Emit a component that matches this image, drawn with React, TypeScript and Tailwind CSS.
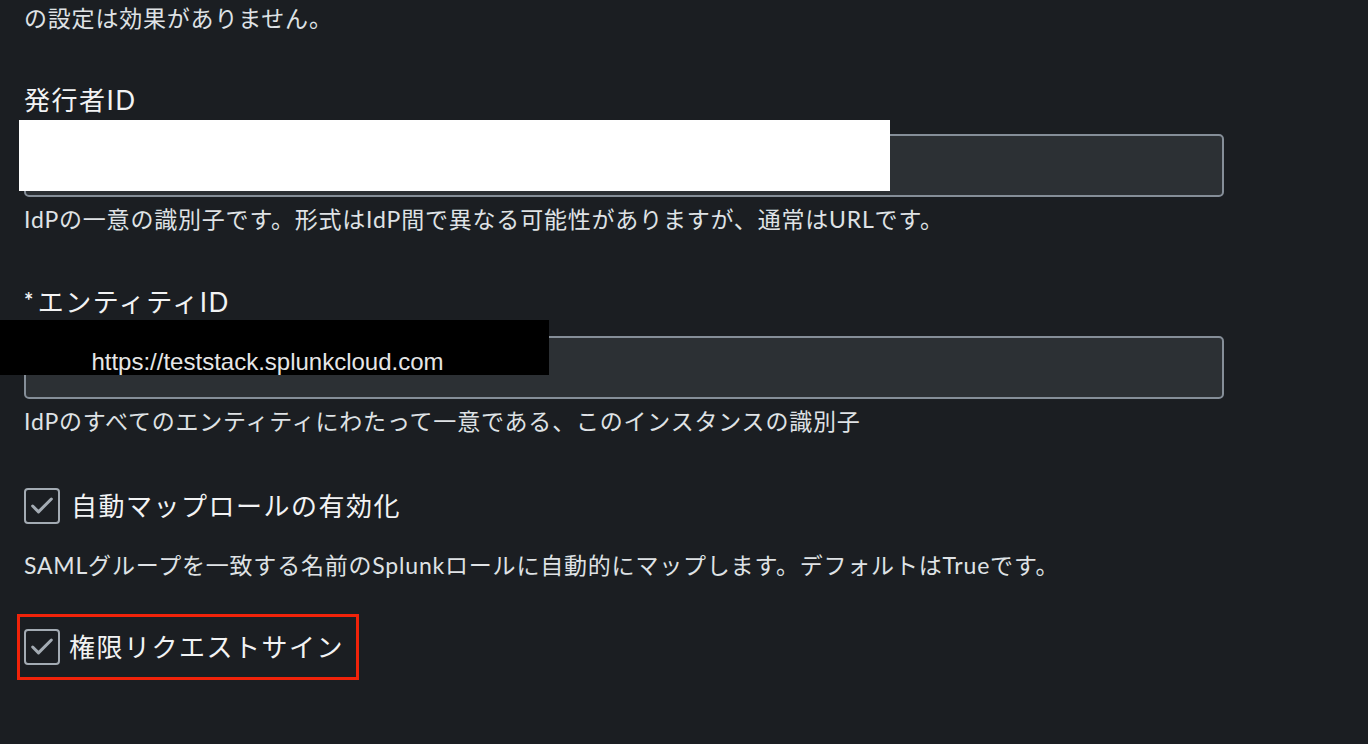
import { Check } from "lucide-react";

const font = "font-['Lato','Noto_Sans_CJK_JP',sans-serif]";
const helpClass = "text-[23px] leading-[36px] tracking-[0.8px] text-[#dfe2e5]";
const labelClass = "block text-[26px] leading-[36px] tracking-[1.5px]";

function Checkbox() {
  return (
    <span className="flex size-[36px] shrink-0 items-center justify-center rounded-[4px] border-2 border-[#a3abb3]">
      <Check className="size-[28px] text-[#a3abb3]" strokeWidth={2.6} aria-hidden />
    </span>
  );
}

function TextInput() {
  return <div className="h-[63px] w-full rounded-[5px] border-2 border-[#858e98] bg-[#2c3034]" />;
}

export default function App() {
  return (
    <div className={`relative min-h-screen w-full overflow-hidden bg-[#1b1e22] text-[#f2f3f4] ${font}`}>
      <div className="ml-[24px] w-[1200px]">
        <p className={helpClass}>の設定は効果がありません。</p>

        <label className={`mt-[46px] ${labelClass}`}>発行者ID</label>
        <div className="mt-[16px]">
          <TextInput />
        </div>
        <p className={`mt-[4px] ${helpClass}`}>
          IdPの一意の識別子です。形式はIdP間で異なる可能性がありますが、通常はURLです。
        </p>

        <label className={`mt-[47px] h-[36px] ${labelClass}`}>
          <span className="relative -top-[3px] mr-[3px] inline-block text-[22px] font-bold leading-none">*</span>
          エンティティID
        </label>
        <div className="mt-[16px]">
          <TextInput />
        </div>
        <p className={`mt-[4px] ${helpClass}`}>
          IdPのすべてのエンティティにわたって一意である、このインスタンスの識別子
        </p>

        <div className="mt-[49px] flex h-[36px] items-center gap-[11px]">
          <Checkbox />
          <span className="text-[26px] leading-[36px] tracking-[1.5px]">自動マップロールの有効化</span>
        </div>
        <p className={`mt-[23px] ${helpClass}`}>
          SAMLグループを一致する名前のSplunkロールに自動的にマップします。デフォルトはTrueです。
        </p>

        <div className="-ml-[7px] mt-[31px] flex h-[66px] w-[342px] items-center gap-[9px] border-[3px] border-[#f0230a] pl-[4px]">
          <Checkbox />
          <span className="text-[26px] leading-[36px] tracking-[1.5px]">権限リクエストサイン</span>
        </div>
      </div>

      {/* redaction overlays from the screenshot */}
      <div className="absolute left-[19px] top-[120px] h-[71px] w-[871px] bg-white" />
      <div className="absolute left-0 top-[320px] flex h-[55px] w-[549px] justify-center bg-black pr-[14px] pt-[28px]">
        <span className="font-['Liberation_Sans',Arial,sans-serif] text-[24px] leading-[28px] text-[#e6e6e6]">
          https://teststack.splunkcloud.com
        </span>
      </div>
    </div>
  );
}
